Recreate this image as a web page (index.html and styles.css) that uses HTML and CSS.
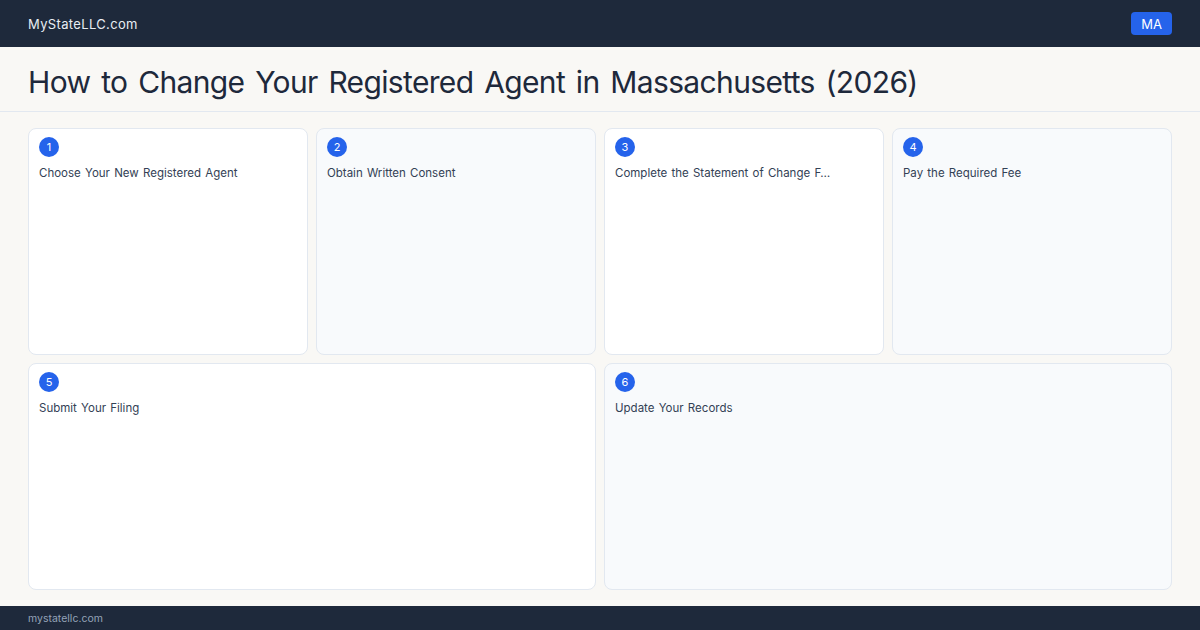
FILE: index.html
```html
<!DOCTYPE html>
<html>
<head>
<meta charset="utf-8">
<link rel="stylesheet" href="styles.css">
</head>
<body>
<div class="page">
  <header class="topbar">
    <span class="logo">MyStateLLC.com</span>
    <span class="badge">MA</span>
  </header>
  <section class="titlebar">
    <h1>How to Change Your Registered Agent in Massachusetts (2026)</h1>
  </section>
  <main class="grid">
    <div class="card"><span class="num">1</span><div class="label">Choose Your New Registered Agent</div></div>
    <div class="card alt"><span class="num">2</span><div class="label">Obtain Written Consent</div></div>
    <div class="card"><span class="num">3</span><div class="label">Complete the Statement of Change F…</div></div>
    <div class="card alt"><span class="num">4</span><div class="label">Pay the Required Fee</div></div>
    <div class="card wide"><span class="num">5</span><div class="label">Submit Your Filing</div></div>
    <div class="card wide alt"><span class="num">6</span><div class="label">Update Your Records</div></div>
  </main>
  <footer class="footer">mystatellc.com</footer>
</div>
</body>
</html>
```
FILE: styles.css
```css
* { box-sizing: border-box; }
html, body { margin: 0; padding: 0; }
body {
  width: 1200px;
  height: 630px;
  overflow: hidden;
  font-family: Inter, "Noto Sans", sans-serif;
  background: #f9f8f5;
  color: #1e293b;
}
.page {
  display: flex;
  flex-direction: column;
  height: 630px;
}
.topbar {
  height: 47px;
  flex: none;
  background: #1e293b;
  display: flex;
  align-items: center;
  justify-content: space-between;
  padding: 0 28px;
}
.logo {
  color: #e8edf3;
  font-size: 13px;
  letter-spacing: 0.35px;
}
.badge {
  background: #2563eb;
  color: #fff;
  font-size: 13px;
  height: 23px;
  width: 41px;
  border-radius: 4px;
  display: flex;
  align-items: center;
  justify-content: center;
}
.titlebar {
  height: 65px;
  flex: none;
  display: flex;
  align-items: center;
  padding: 5px 28px 0;
  border-bottom: 1px solid #e2e8f0;
}
h1 {
  margin: 0;
  font-size: 30px;
  font-weight: 400;
  color: #1e293b;
  letter-spacing: -0.65px;
  word-spacing: 3px;
}
.grid {
  flex: 1;
  display: grid;
  grid-template-columns: repeat(4, 1fr);
  grid-template-rows: 1fr 1fr;
  gap: 8px;
  padding: 16px 28px;
  min-height: 0;
}
.card {
  background: #fff;
  border: 1px solid #e2e8f0;
  border-radius: 8px;
  padding: 8px 10px;
  overflow: hidden;
}
.card.alt { background: #f8fafc; }
.card.wide { grid-column: span 2; }
.num {
  display: flex;
  width: 20px;
  height: 20px;
  border-radius: 50%;
  background: #2563eb;
  color: #fff;
  font-size: 11px;
  align-items: center;
  justify-content: center;
}
.label {
  margin-top: 9px;
  font-size: 11.5px;
  color: #334155;
  white-space: nowrap;
  word-spacing: 1px;
}
.footer {
  height: 24px;
  flex: none;
  background: #1e293b;
  color: #94a3b8;
  font-size: 10.5px;
  display: flex;
  align-items: center;
  padding: 0 28px;
}
```
